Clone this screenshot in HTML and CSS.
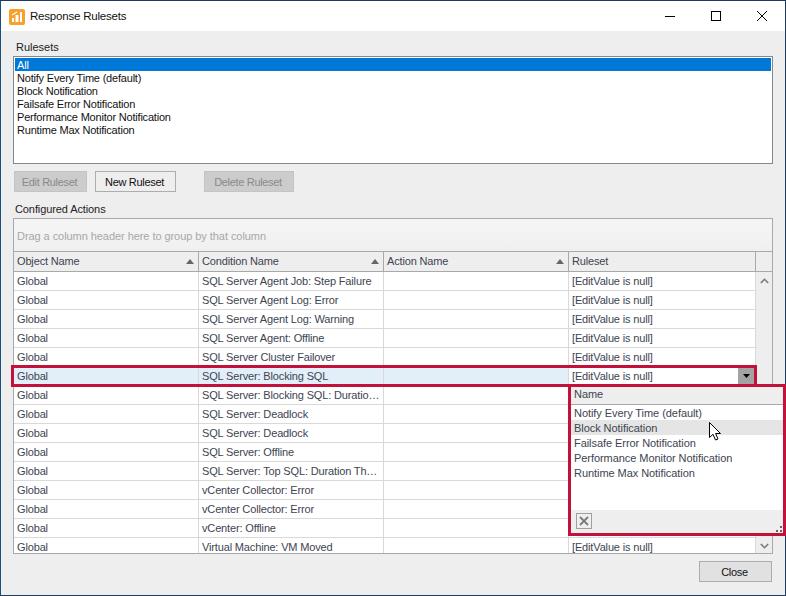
FILE: index.html
```html
<!DOCTYPE html>
<html lang="en">
<head>
<meta charset="utf-8">
<title>Response Rulesets</title>
<link rel="stylesheet" href="styles.css">
</head>
<body>
<div class="window">
  <header class="titlebar">
    <svg class="app-icon" viewBox="0 0 16 16" width="16" height="16"><rect width="16" height="16" rx="2" fill="#f7a12b"/><rect x="3" y="9" width="2" height="4" fill="#fff"/><rect x="6.5" y="6" width="3" height="7" fill="#fff"/><rect x="11" y="3" width="2" height="10" fill="#fff"/><path d="M3 6 L8 3" stroke="#fff" stroke-width="1.2" fill="none"/></svg>
    <span class="title">Response Rulesets</span>
    <div class="controls">
      <svg class="ctl" viewBox="0 0 46 30" width="46" height="30"><path d="M18 15.5H28" stroke="#000" fill="none"/></svg>
      <svg class="ctl" viewBox="0 0 46 30" width="46" height="30"><rect x="18.5" y="10.5" width="9" height="9" stroke="#000" fill="none"/></svg>
      <svg class="ctl" viewBox="0 0 46 30" width="46" height="30"><path d="M18 10L28 20M28 10L18 20" stroke="#000" fill="none"/></svg>
    </div>
  </header>
  <main class="content">
    <div class="label label-rulesets">Rulesets</div>
    <ul class="listbox">
      <li class="selected">All</li>
      <li>Notify Every Time (default)</li>
      <li>Block Notification</li>
      <li>Failsafe Error Notification</li>
      <li>Performance Monitor Notification</li>
      <li>Runtime Max Notification</li>
    </ul>
    <div class="buttons">
      <button class="btn disabled btn-edit">Edit Ruleset</button>
      <button class="btn btn-new">New Ruleset</button>
      <button class="btn disabled btn-delete">Delete Ruleset</button>
    </div>
    <div class="label label-actions">Configured Actions</div>
    <section class="grid">
      <div class="group-panel">Drag a column header here to group by that column</div>
      <div class="row head">
        <div class="cell">Object Name<i class="sort"></i></div>
        <div class="cell">Condition Name<i class="sort"></i></div>
        <div class="cell">Action Name<i class="sort"></i></div>
        <div class="cell">Ruleset</div>
        <div class="corner"></div>
      </div>
      <div class="body">
        <div class="rows">
          <div class="row"><div class="cell">Global</div><div class="cell">SQL Server Agent Job: Step Failure</div><div class="cell"></div><div class="cell">[EditValue is null]</div></div>
          <div class="row"><div class="cell">Global</div><div class="cell">SQL Server Agent Log: Error</div><div class="cell"></div><div class="cell">[EditValue is null]</div></div>
          <div class="row"><div class="cell">Global</div><div class="cell">SQL Server Agent Log: Warning</div><div class="cell"></div><div class="cell">[EditValue is null]</div></div>
          <div class="row"><div class="cell">Global</div><div class="cell">SQL Server Agent: Offline</div><div class="cell"></div><div class="cell">[EditValue is null]</div></div>
          <div class="row"><div class="cell">Global</div><div class="cell">SQL Server Cluster Failover</div><div class="cell"></div><div class="cell">[EditValue is null]</div></div>
          <div class="row focused"><div class="cell">Global</div><div class="cell">SQL Server: Blocking SQL</div><div class="cell"></div><div class="cell editor">[EditValue is null]<span class="drop"><svg viewBox="0 0 7 4" width="7" height="4"><path d="M0 0H7L3.5 4Z" fill="#000"/></svg></span></div></div>
          <div class="row"><div class="cell">Global</div><div class="cell">SQL Server: Blocking SQL: Duratio…</div><div class="cell"></div><div class="cell"></div></div>
          <div class="row"><div class="cell">Global</div><div class="cell">SQL Server: Deadlock</div><div class="cell"></div><div class="cell"></div></div>
          <div class="row"><div class="cell">Global</div><div class="cell">SQL Server: Deadlock</div><div class="cell"></div><div class="cell"></div></div>
          <div class="row"><div class="cell">Global</div><div class="cell">SQL Server: Offline</div><div class="cell"></div><div class="cell"></div></div>
          <div class="row"><div class="cell">Global</div><div class="cell">SQL Server: Top SQL: Duration Th…</div><div class="cell"></div><div class="cell"></div></div>
          <div class="row"><div class="cell">Global</div><div class="cell">vCenter Collector: Error</div><div class="cell"></div><div class="cell"></div></div>
          <div class="row"><div class="cell">Global</div><div class="cell">vCenter Collector: Error</div><div class="cell"></div><div class="cell"></div></div>
          <div class="row"><div class="cell">Global</div><div class="cell">vCenter: Offline</div><div class="cell"></div><div class="cell"></div></div>
          <div class="row"><div class="cell">Global</div><div class="cell">Virtual Machine: VM Moved</div><div class="cell"></div><div class="cell">[EditValue is null]</div></div>
        </div>
        <div class="scrollbar">
          <svg viewBox="0 0 9 6" width="9" height="6"><path d="M.8 5L4.5 1.3L8.2 5" stroke="#7a7a7a" stroke-width="1.6" fill="none"/></svg>
          <svg viewBox="0 0 9 6" width="9" height="6"><path d="M.8 1L4.5 4.7L8.2 1" stroke="#7a7a7a" stroke-width="1.6" fill="none"/></svg>
        </div>
      </div>
    </section>
    <footer class="footer"><button class="btn btn-close">Close</button></footer>
  </main>

  <div class="callout-row"></div>
  <aside class="popup">
    <div class="popup-head">Name</div>
    <ul class="popup-list">
      <li>Notify Every Time (default)</li>
      <li class="hover">Block Notification</li>
      <li>Failsafe Error Notification</li>
      <li>Performance Monitor Notification</li>
      <li>Runtime Max Notification</li>
    </ul>
    <div class="popup-foot">
      <span class="clear"><svg viewBox="0 0 10 10" width="10" height="10"><path d="M1 1L9 9M9 1L1 9" stroke="#7a7a7a" stroke-width="1.8" fill="none"/></svg></span>
      <svg class="grip" viewBox="0 0 6 6" width="6" height="6"><path d="M4 0h2v2H4zM0 4h2v2H0zM4 4h2v2H4z" fill="#666"/></svg>
    </div>
  </aside>
  <svg class="cursor" viewBox="0 0 13 19" width="13" height="19"><path d="M.5.5V15.5L4 12.3L6.5 18L9 17L6.6 11.5H11.5Z" fill="#fff" stroke="#000"/></svg>
</div>
</body>
</html>
```
FILE: styles.css
```css
* { box-sizing: border-box; }
html, body { margin: 0; padding: 0; overflow: hidden; }
body { width: 786px; height: 596px; font: 11px/13px "Liberation Sans", Arial, sans-serif; color: #111; }
ul { list-style: none; margin: 0; padding: 0; }

.window { position: relative; width: 786px; height: 596px; display: flex; flex-direction: column; background: #eee; border: 1px solid #1d3a60; border-left-color: #17507f; }

.titlebar { flex: none; height: 30px; background: #fff; display: flex; align-items: center; padding-left: 8px; }
.app-icon { margin-top: 1px; }
.title { margin-left: 5px; font-size: 11.5px; letter-spacing: -0.2px; color: #111; }
.controls { margin-left: auto; display: flex; }
.ctl { display: block; }

.content { flex: 1; padding: 0 12px; display: flex; flex-direction: column; }
.label { color: #222; padding-left: 2px; }
.label-rulesets { height: 25px; padding-top: 10px; padding-left: 3px; }
.label-actions { height: 26px; padding-top: 11px; letter-spacing: -0.1px; }

.listbox { height: 108px; background: #fff; border: 1px solid #828790; padding: 1px; color: #111; letter-spacing: -0.2px; }
.listbox li { height: 13px; padding-left: 2px; line-height: 15px; }
.listbox .selected { background: #0078d7; color: #fff; }

.buttons { display: flex; margin-top: 7px; padding-left: 1px; }
.btn { height: 21px; padding: 1px 2px 0 0; font: inherit; letter-spacing: -0.32px; background: #eee; border: 1px solid #adadad; color: #111; }
.btn.disabled { background: #ccc; border-color: #c4c4c4; color: #8a8a8a; }
.btn-edit { width: 73px; }
.btn-new { width: 81px; margin-left: 8px; }
.btn-delete { width: 90px; margin-left: 28px; }

.grid { height: 336px; width: 760px; background: #fff; border: 1px solid #a9a9a9; display: flex; flex-direction: column; }
.group-panel { flex: none; height: 33px; padding: 11px 0 0 3px; background: linear-gradient(#f5f5f5, #f0f0f0); border-bottom: 1px solid #a9a9a9; color: #a8a8a8; letter-spacing: -0.06px; }
.row { display: grid; grid-template-columns: 185px 185px 185px 187px; height: 19px; border-bottom: 1px solid #d9d9d9; }
.cell { position: relative; padding: 3px 0 0 3px; border-right: 1px solid #d9d9d9; white-space: nowrap; overflow: hidden; color: #3d4450; letter-spacing: -0.15px; }
.head { flex: none; height: 20px; background: #eee; border-bottom: 1px solid #a9a9a9; grid-template-columns: 185px 185px 185px 187px 16px; }
.head .cell { border-right-color: #a9a9a9; padding-top: 3px; }
.sort { position: absolute; right: 4px; top: 7px; width: 0; height: 0; border-left: 4px solid transparent; border-right: 4px solid transparent; border-bottom: 5px solid #666; }
.body { flex: 1; min-height: 0; display: flex; overflow: hidden; }
.rows { width: 742px; flex: none; }
.scrollbar { flex: 1; background: #eee; display: flex; flex-direction: column; justify-content: space-between; align-items: center; padding: 6px 0 4px; }

.focused { background: #e3eff8; }
.editor { background: #fff; }
.drop { position: absolute; right: 1px; top: 0; width: 16px; height: 18px; background: #a3a3a3; display: flex; align-items: center; justify-content: center; }

.footer { display: flex; justify-content: flex-end; margin-top: 7px; padding-right: 1px; }
.btn-close { width: 73px; background: #e1e1e1; border-color: #adadad; }

.callout-row { position: absolute; left: 10px; top: 364px; width: 746px; height: 22px; border: 3px solid #c2113a; pointer-events: none; }
.popup { position: absolute; left: 567px; top: 383px; width: 218px; height: 152px; background: #fff; border: 3px solid #c2113a; display: flex; flex-direction: column; letter-spacing: -0.06px; }
.popup-head { flex: none; height: 18px; background: #eee; border-bottom: 1px solid #a9a9a9; padding: 1px 0 0 3px; color: #3d4450; }
.popup-list { flex: 1; }
.popup-list li { height: 15px; padding: 2px 0 0 3px; color: #3d4450; }
.popup-list .hover { background: #e5e5e5; }
.popup-foot { position: relative; flex: none; height: 23px; background: #eee; padding: 3px 0 0 5px; }
.clear { display: flex; width: 16px; height: 16px; border: 1px solid #a0a0a0; align-items: center; justify-content: center; }
.grip { position: absolute; right: 1px; bottom: 1px; }
.cursor { position: absolute; left: 708px; top: 421px; }
```
